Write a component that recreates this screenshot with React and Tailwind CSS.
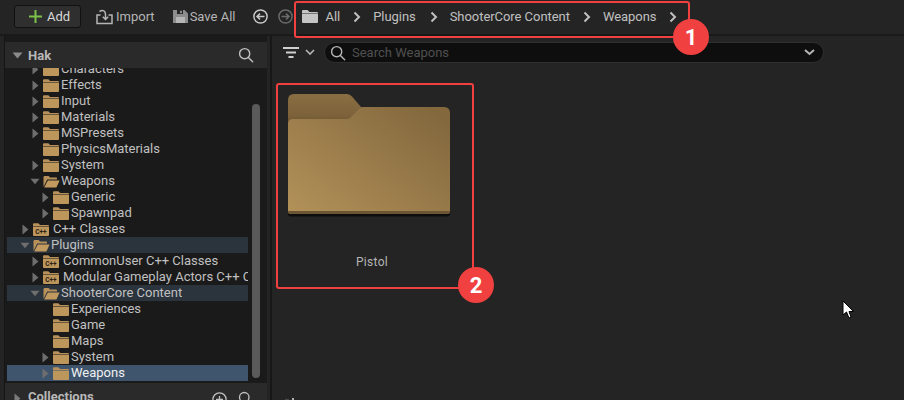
import React from "react";

const indent = ["pl-[13px]", "pl-[23px]", "pl-[33px]"];

function Folder({ open, cpp }) {
  if (open) {
    return (
      <svg width="17" height="13" viewBox="0 0 17 13" className="shrink-0">
        <path d="M0.5 12V2.2Q0.5 1 1.7 1H5.6L7 2.4H13.2Q14 2.4 14 3.2V4.4H4.2L0.5 12Z" fill="#b8915a" />
        <path d="M4.8 5.4H16.6L13.4 12.6H1.2Z" fill="#c19a5f" />
      </svg>
    );
  }
  return (
    <svg width="16" height="13" viewBox="0 0 16 13" className="shrink-0">
      <path d="M0 3V1.2Q0 0.2 1 0.2H5Q5.6 0.2 6 0.8L7 2H15Q16 2 16 3V3.4H0Z" fill="#b8915a" />
      <path d="M0 4H16V12Q16 13 15 13H1Q0 13 0 12Z" fill="#bd965c" />
      {cpp && (
        <text x="8" y="10.8" textAnchor="middle" fontSize="6.5" fontWeight="700" fill="#2a2012" fontFamily="Roboto, sans-serif">C++</text>
      )}
    </svg>
  );
}

function Arrow({ state }) {
  return (
    <span className="w-[10px] h-4 flex items-center justify-center shrink-0">
      {state === "closed" && (
        <svg width="7" height="11" viewBox="0 0 7 11"><path d="M0.5 0.5L6.5 5.5L0.5 10.5Z" fill="#6e6e6e" /></svg>
      )}
      {state === "open" && (
        <svg width="11" height="7" viewBox="0 0 11 7"><path d="M0.5 0.5H10.5L5.5 6.5Z" fill="#6e6e6e" /></svg>
      )}
    </span>
  );
}

const rows = [
  ["Characters", 1, "closed"],
  ["Effects", 1, "closed"],
  ["Input", 1, "closed"],
  ["Materials", 1, "closed"],
  ["MSPresets", 1, "closed"],
  ["PhysicsMaterials", 1, "none"],
  ["System", 1, "closed"],
  ["Weapons", 1, "open"],
  ["Generic", 2, "closed"],
  ["Spawnpad", 2, "closed"],
  ["C++ Classes", 0, "closed", { cpp: true }],
  ["Plugins", 0, "open", { hl: true }],
  ["CommonUser C++ Classes", 1, "closed", { cpp: true }],
  ["Modular Gameplay Actors C++ Classes", 1, "closed", { cpp: true }],
  ["ShooterCore Content", 1, "open", { hl: true }],
  ["Experiences", 2, "none"],
  ["Game", 2, "none"],
  ["Maps", 2, "none"],
  ["System", 2, "closed"],
  ["Weapons", 2, "closed", { sel: true }],
];

function Row({ label, depth, state, opts = {} }) {
  const bg = opts.sel ? "bg-[#3f556d]" : opts.hl ? "bg-[#2b333c]" : "";
  const color = opts.sel ? "text-[#f0f0f0]" : "text-[#c0c0c0]";
  const gap = opts.cpp ? "ml-[4px]" : state === "open" ? "ml-[1px]" : "ml-[2px]";
  return (
    <div className={`flex items-center h-4 w-[241px] overflow-hidden ${bg} ${indent[depth]}`}>
      <Arrow state={state} />
      <span className="flex items-center ml-[3px]">
        <Folder open={state === "open"} cpp={opts.cpp} />
      </span>
      <span className={`${gap} text-[13px] leading-4 whitespace-nowrap ${color}`}>{label}</span>
    </div>
  );
}

function Search({ size = 18, color = "#c0c0c0" }) {
  return (
    <svg width={size} height={size} viewBox="0 0 18 18" fill="none" stroke={color} strokeWidth="1.6">
      <circle cx="7.5" cy="7.5" r="5.7" />
      <path d="M11.7 11.7L16.5 16.5" strokeLinecap="round" />
    </svg>
  );
}

function Chev({ className = "" }) {
  return (
    <svg width="8" height="12" viewBox="0 0 8 12" className={className} fill="none" stroke="#c0c0c0" strokeWidth="2">
      <path d="M1.5 1.5L6 6L1.5 10.5" />
    </svg>
  );
}

function Crumb({ children, gap }) {
  return <span className={`text-[13px] tracking-[-0.05px] text-[#c0c0c0] whitespace-nowrap ${gap}`}>{children}</span>;
}

export default function App() {
  return (
    <div className="relative w-[904px] h-[400px] overflow-hidden bg-[#242424] flex flex-col font-['Roboto',sans-serif]">
      {/* toolbar */}
      <div className="h-[34px] shrink-0 flex items-center bg-[#242424] pl-[14px] pb-[1px]">
        <button className="w-[67px] h-[23px] flex items-center pl-[14px] gap-[5px] rounded-[3px] bg-[#2f2f2f] border border-[#111111]">
          <svg width="13" height="13" viewBox="0 0 13 13"><path d="M5.5 0H7.5V5.5H13V7.5H7.5V13H5.5V7.5H0V5.5H5.5Z" fill="#7cc04a" /></svg>
          <span className="text-[13px] text-[#d8d8d8]">Add</span>
        </button>
        <svg width="17" height="16" viewBox="0 0 17 16" className="ml-[15px]" fill="none" stroke="#b5b5b5" strokeWidth="1.5">
          <path d="M4.5 6H1V14.500H16V6H12.500" />
          <path d="M3.500 2.500C7 0.500 9.500 2 9.500 5.500V10M6.800 7.800L9.500 10.500L12.200 7.800" />
        </svg>
        <span className="ml-[3px] text-[13px] text-[#b5b5b5]">Import</span>
        <svg width="15" height="15" viewBox="0 0 15 15" className="ml-[18px]">
          <path d="M0 1H11.500L15 4.500V14H0Z" fill="#8c8c8c" />
          <rect x="4" y="1" width="6" height="4" fill="#242424" />
          <rect x="7" y="1.800" width="2" height="2.400" fill="#8c8c8c" />
          <rect x="3" y="8" width="9" height="6" fill="#b5b5b5" />
        </svg>
        <span className="ml-[2px] text-[13px] text-[#b5b5b5]">Save All</span>
        <svg width="15" height="15" viewBox="0 0 15 15" className="ml-[18px]" fill="none" stroke="#c8c8c8" strokeWidth="1.500">
          <circle cx="7.500" cy="7.500" r="6.600" />
          <path d="M11.500 7.500H4.200M7 4.600L4 7.500L7 10.400" />
        </svg>
        <svg width="15" height="15" viewBox="0 0 15 15" className="ml-[10px]" fill="none" stroke="#6a6a6a" strokeWidth="1.500">
          <circle cx="7.500" cy="7.500" r="6.600" />
          <path d="M3.500 7.500H10.800M8 4.600L11 7.500L8 10.400" />
        </svg>
        <svg width="16" height="13" viewBox="0 0 16 13" className="ml-[9px]">
          <path d="M0 3V1Q0 0 1 0H5.500L7.500 2H15Q16 2 16 3V3.500H0Z" fill="#c4c4c4" />
          <path d="M0 4H16V12Q16 13 15 13H1Q0 13 0 12Z" fill="#c4c4c4" />
        </svg>
        <Crumb gap="ml-[7px]">All</Crumb>
        <Chev className="ml-[13px]" />
        <Crumb gap="ml-[12px]">Plugins</Crumb>
        <Chev className="ml-[14px]" />
        <Crumb gap="ml-[12px]">ShooterCore Content</Crumb>
        <Chev className="ml-[13px]" />
        <Crumb gap="ml-[12px]">Weapons</Crumb>
        <Chev className="ml-[13px]" />
      </div>
      <div className="h-[2px] shrink-0 bg-[#1a1a1a]" />

      {/* body */}
      <div className="flex-1 flex min-h-0">
        <div className="w-[5px] shrink-0 bg-[#242424] border-r border-[#151515]" />
        {/* sidebar */}
        <div className="w-[262px] shrink-0 flex flex-col bg-[#1a1a1a]">
          <div className="mt-[6px] h-[26px] shrink-0 flex items-center bg-[#2a2a2a] pl-[7px] pr-[13px]">
            <svg width="11" height="7" viewBox="0 0 11 7"><path d="M0.500 0.500H10.500L5.500 6.500Z" fill="#8a8a8a" /></svg>
            <span className="ml-[5px] pt-[1px] text-[13px] font-bold text-[#b8b8b8]">Hak</span>
            <span className="ml-auto flex"><Search size={16} /></span>
          </div>
          <div className="flex-1 flex min-h-0">
            <div className="flex-1 overflow-hidden pl-[2px]">
              <div className="-mt-[7px]">
                {rows.map(([label, depth, state, opts], i) => (
                  <Row key={i} label={label} depth={depth} state={state} opts={opts} />
                ))}
              </div>
            </div>
            <div className="w-[15px] shrink-0 pt-[36px]">
              <div className="w-[8px] h-[274px] rounded-full bg-[#5a5a5a]" />
            </div>
          </div>
          <div className="h-[17px] shrink-0 bg-[#2a2a2a] flex items-start pl-[9px] pr-[14px]">
            <svg width="7" height="11" viewBox="0 0 7 11" className="mt-[10px]"><path d="M0.500 0.500L6.500 5.500L0.500 10.500Z" fill="#7a7a7a" /></svg>
            <span className="ml-[7px] text-[13px] leading-4 mt-[6px] font-bold text-[#b8b8b8]">Collections</span>
            <svg width="15" height="15" viewBox="0 0 15 15" className="ml-auto mt-[9px]" fill="none" stroke="#c0c0c0" strokeWidth="1.300">
              <circle cx="7.500" cy="7.500" r="6.600" />
              <path d="M7.500 4V11M4 7.500H11" />
            </svg>
            <span className="ml-[11px] mt-[8px] flex"><Search size={15} /></span>
          </div>
        </div>

        <div className="w-[3px] shrink-0 bg-[#242424]" />
        <div className="w-[2px] shrink-0 bg-[#171717]" />

        {/* content */}
        <div className="relative flex-1 bg-[#242424] flex flex-col min-w-0">
          <div className="mt-[6px] h-[21px] shrink-0 flex items-center pl-[11px]">
            <svg width="16" height="11" viewBox="0 0 16 11" fill="#cfcfcf">
              <rect x="0" y="0" width="16" height="2" />
              <rect x="3" y="4.500" width="10" height="2" />
              <rect x="5.500" y="9" width="5" height="2" />
            </svg>
            <svg width="10" height="7" viewBox="0 0 10 7" className="ml-[6px]" fill="none" stroke="#b5b5b5" strokeWidth="1.600">
              <path d="M1 1L5 5L9 1" />
            </svg>
            <div className="ml-[9px] w-[500px] h-[21px] rounded-full bg-[#0e0e0e] border border-[#2f2f2f] flex items-center pl-[5px] pr-[8px]">
              <Search size={16} color="#b5b5b5" />
              <span className="ml-[6px] text-[13px] leading-[18px] text-[#505050]">Search Weapons</span>
              <svg width="11" height="7" viewBox="0 0 11 7" className="ml-auto" fill="none" stroke="#b5b5b5" strokeWidth="2">
                <path d="M1 1L5.500 5L10 1" />
              </svg>
            </div>
          </div>
          <div className="pl-[16px] pt-[31px]">
            <svg width="163" height="124" viewBox="0 0 163 124" className="block">
              <defs>
                <linearGradient id="front" x1="0" y1="1" x2="1" y2="0.150">
                  <stop offset="0" stopColor="#b39259" />
                  <stop offset="1" stopColor="#83683e" />
                </linearGradient>
                <linearGradient id="tab" x1="0" y1="0" x2="0" y2="1">
                  <stop offset="0" stopColor="#8a6e43" />
                  <stop offset="0.550" stopColor="#7c623a" />
                  <stop offset="1" stopColor="#4a3b24" />
                </linearGradient>
              </defs>
              <path d="M0 40V6Q0 0 6 0H59Q62 0 64 2.500L73 13V40Z" fill="url(#tab)" />
              <path d="M0 118H162V120Q162 122 160 122.500H2Q0 122 0 120Z" fill="#0d0d0d" />
              <path d="M0 30Q0 25 5 25H59Q61.500 25 63 23L72 14Q73 13 75 13H156Q162 13 162 19V117Q162 120 159 120H3Q0 120 0 117Z" fill="url(#front)" />
              <path d="M0 117H162Q162 120 159 120H3Q0 120 0 117Z" fill="#6b5535" />
            </svg>
            <div className="w-[168px] mt-[35px] text-center text-[12px] tracking-[0.3px] text-[#b5b5b5]">Pistol</div>
          </div>
          <div className="absolute left-[13px] bottom-0 w-[4px] h-[1px] bg-[#4a4a4a]" />
          <div className="absolute left-[20px] bottom-0 w-[2px] h-[2px] bg-[#b0b0b0]" />
        </div>
      </div>

      {/* annotations */}
      <div className="absolute left-[294px] top-[1px] w-[396px] h-[37px] border-2 border-[#f04040] rounded-[3px]" />
      <div className="absolute left-[673px] top-[19px] w-[36px] h-[36px] rounded-full bg-[#f04040] flex items-center justify-center text-white text-[22px] font-bold">1</div>
      <div className="absolute left-[276px] top-[83px] w-[198px] h-[206px] border-2 border-[#f04040] rounded-[3px]" />
      <div className="absolute left-[458px] top-[267px] w-[36px] h-[36px] rounded-full bg-[#f04040] flex items-center justify-center text-white text-[22px] font-bold">2</div>
      {/* cursor */}
      <svg className="absolute left-[842px] top-[300px]" width="13" height="19" viewBox="0 0 13 19">
        <path d="M1 1V15L4.500 12L7 18L9 17L7 11.500H11.500Z" fill="#ffffff" stroke="#000000" strokeWidth="1" />
      </svg>
    </div>
  );
}
